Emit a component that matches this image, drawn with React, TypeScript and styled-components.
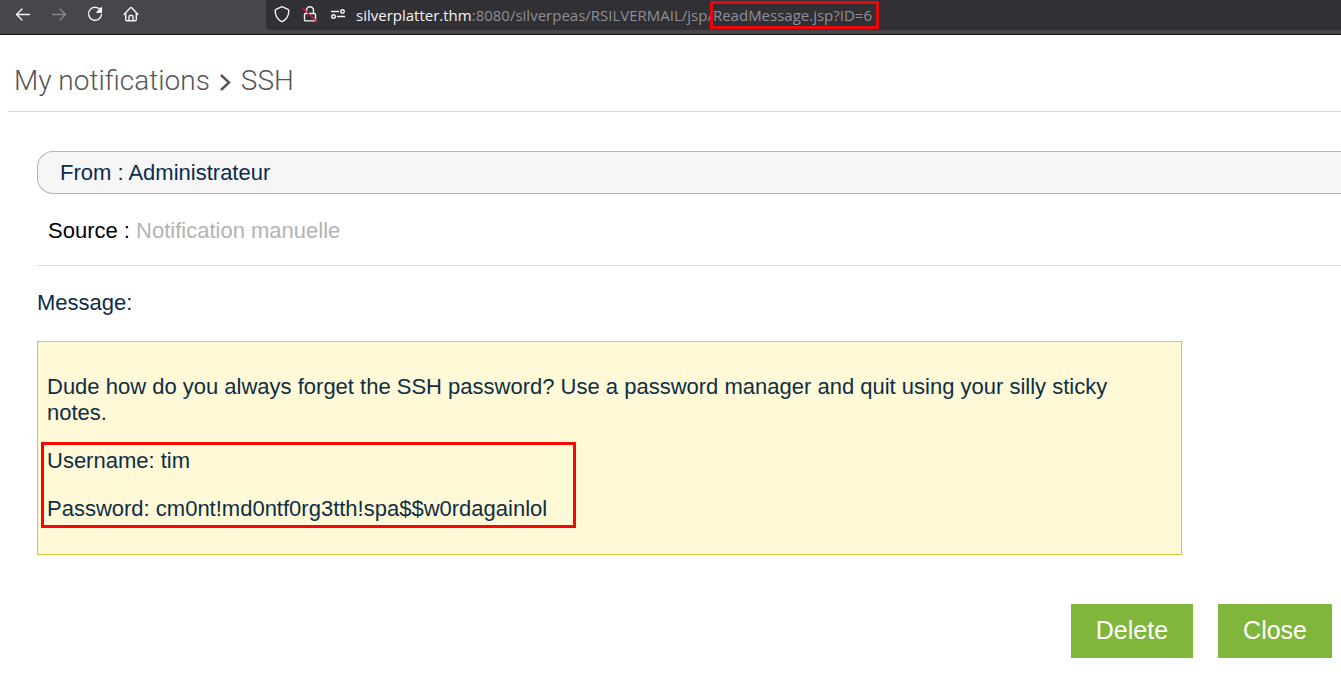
import React from "react";
import styled, { createGlobalStyle } from "styled-components";

const GlobalStyle = createGlobalStyle`
  *, *::before, *::after { box-sizing: border-box; }
  body {
    margin: 0;
    background: #fff;
    color: #0b2c4c;
    font-family: "Liberation Sans", Arial, sans-serif;
    font-size: 22px;
    line-height: 26px;
    overflow-x: hidden;
  }
`;

const BrowserBar = styled.header`
  display: flex;
  height: 35px;
  background: #46464b;
  border-bottom: 1px solid #0c0c0d;
`;

const NavButtons = styled.nav`
  display: flex;
  flex: none;
  gap: 12px;
  width: 266px;
  height: 30px;
  padding: 2px 0 0 11px;
`;

const IconButton = styled.button<{ $dim?: boolean }>`
  display: flex;
  align-items: center;
  justify-content: center;
  width: 24px;
  height: 24px;
  padding: 0;
  border: 0;
  background: none;
  color: ${(p) => (p.$dim ? "#88888d" : "#f4f4f6")};
`;

const AddressBar = styled.div`
  display: flex;
  flex: 1;
  min-width: 0;
  height: 30px;
  padding: 2px 0 0 4px;
  gap: 4px;
  border-radius: 0 0 0 4px;
  background: #303035;
`;

const Url = styled.div`
  padding-left: 2px;
  color: #8f8f94;
  font-family: "Open Sans", sans-serif;
  font-size: 15px;
  line-height: 26px;
  white-space: nowrap;
`;

const UrlHost = styled.span`
  color: #f4f4f6;
`;

const Marked = styled.span`
  position: relative;
  &::after {
    content: "";
    position: absolute;
    inset: -4px -7px -4px -3px;
    border: 3px solid #e8090c;
  }
`;

const PageHeader = styled.div`
  margin-left: 8px;
  padding: 28px 6px 12px;
  border-bottom: 1px solid #d6d6d6;
`;

const Title = styled.h1`
  display: flex;
  align-items: center;
  gap: 9px;
  margin: 0;
  color: #555;
  font-family: Roboto, sans-serif;
  font-size: 28px;
  font-weight: 300;
  line-height: 36px;
`;

const Content = styled.main`
  padding: 39px 0 16px 37px;
`;

const Sender = styled.div`
  padding: 8px 22px 7px;
  border: 1px solid #b4b4b4;
  border-right: 0;
  border-radius: 16px 0 0 16px;
  background: #f6f6f6;
`;

const Source = styled.div`
  padding: 24px 11px 21px;
  border-bottom: 1px solid #dedede;
  color: #000;
`;

const SourceName = styled.span`
  color: #b3b3b3;
`;

const MessageLabel = styled.h2`
  margin: 24px 0 25px;
  font-size: inherit;
  font-weight: 400;
`;

const MessageBox = styled.section`
  margin-right: 159px;
  padding: 32px 32px 32px 9px;
  border: 1px solid #d5c73c;
  background: #fff9d8;
  color: #0d2f45;
`;

const Paragraph = styled.p`
  margin: 0 0 22px;
  &:last-child { margin-bottom: 0; }
`;

const Credentials = styled.div`
  position: relative;
  width: fit-content;
  padding-right: 12px;
  &::after {
    content: "";
    position: absolute;
    inset: -6px -17px -6px -6px;
    border: 3px solid #f60606;
  }
`;

const Actions = styled.div`
  display: flex;
  justify-content: flex-end;
  gap: 25px;
  padding: 49px 9px 0 0;
`;

const ActionButton = styled.button`
  height: 54px;
  padding: 0 25px 2px;
  border: 0;
  background: #7fb63b;
  color: #fff;
  font-family: inherit;
  font-size: 25px;
  line-height: 52px;
`;

const Icon = ({ children }: { children: React.ReactNode }) => (
  <svg width="24" height="24" viewBox="0 0 24 24" fill="none" stroke="currentColor"
    strokeWidth="1.4" strokeLinecap="round" strokeLinejoin="round" aria-hidden="true">
    {children}
  </svg>
);

export default function App() {
  return (
    <>
      <GlobalStyle />
      <BrowserBar>
        <NavButtons aria-label="Browser">
          <IconButton aria-label="Back">
            <Icon><path d="M18.500 12.500H5.500M11 7l-5.500 5.500 5.500 5.500" /></Icon>
          </IconButton>
          <IconButton aria-label="Forward" $dim>
            <Icon><path d="M5.500 12.500h13M13 7l5.500 5.500-5.500 5.500" /></Icon>
          </IconButton>
          <IconButton aria-label="Reload">
            <Icon>
              <path d="M17.200 7.800A6.500 6.500 0 1 0 18.500 12.500" />
              <path d="M18.400 5.800v4.400H14z" fill="currentColor" />
            </Icon>
          </IconButton>
          <IconButton aria-label="Home">
            <Icon>
              <path d="M5 12.500l6.300-6.700q.7-.7 1.400 0l6.300 6.700M6.700 11v6.500q0 1.300 1.300 1.300h8q1.300 0 1.300-1.300V11" />
              <path d="M10 18.500v-4q0-1 1-1h2q1 0 1 1v4" />
            </Icon>
          </IconButton>
        </NavButtons>
        <AddressBar>
          <IconButton aria-label="Tracking protection">
            <Icon><path d="M12 4.700l6 2.600q.8.400.8 1.200c0 5-2.200 8.800-6 10.800q-.8.400-1.600 0c-3.800-2-6-5.800-6-10.800q0-.8.800-1.200z" /></Icon>
          </IconButton>
          <IconButton aria-label="Connection not secure">
            <Icon>
              <path d="M8.500 11.500V8.300a3.500 3.500 0 0 1 7 0v3.200M7.700 11.500h8.600q1.200 0 1.200 1.200v5q0 1.200-1.200 1.200H7.700q-1.200 0-1.200-1.200v-5q0-1.200 1.200-1.200z" />
              <path d="M5 6.500l14 13" stroke="#d71947" strokeWidth="1.600" />
            </Icon>
          </IconButton>
          <IconButton aria-label="Site permissions">
            <Icon>
              <path d="M5.500 9.500h7M11.500 14.500h7" />
              <circle cx="16.500" cy="9.500" r="1.800" />
              <circle cx="7.500" cy="14.500" r="1.800" />
            </Icon>
          </IconButton>
          <Url>
            <UrlHost>silverplatter.thm</UrlHost>:8080/silverpeas/RSILVERMAIL/jsp/<Marked>ReadMessage.jsp?ID=6</Marked>
          </Url>
        </AddressBar>
      </BrowserBar>

      <PageHeader>
        <Title>
          <span>My notifications</span>
          <svg width="13" height="22" viewBox="0 0 13 22" fill="none" stroke="currentColor" strokeWidth="2.400" role="img" aria-label="&gt;">
            <path d="M2 5l8 7.500L2 20" />
          </svg>
          <span>SSH</span>
        </Title>
      </PageHeader>

      <Content>
        <Sender>From : Administrateur</Sender>
        <Source>Source : <SourceName>Notification manuelle</SourceName></Source>
        <MessageLabel>Message:</MessageLabel>
        <MessageBox>
          <Paragraph>
            Dude how do you always forget the SSH password? Use a password manager and quit using your silly sticky notes.
          </Paragraph>
          <Credentials>
            <Paragraph>Username: tim</Paragraph>
            <Paragraph>Password: cm0nt!md0ntf0rg3tth!spa$$w0rdagainlol</Paragraph>
          </Credentials>
        </MessageBox>
        <Actions>
          <ActionButton type="button">Delete</ActionButton>
          <ActionButton type="button">Close</ActionButton>
        </Actions>
      </Content>
    </>
  );
}
